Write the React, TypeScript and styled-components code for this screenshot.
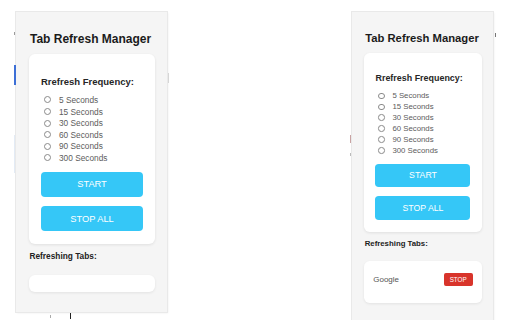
import React from "react";
import styled, { createGlobalStyle } from "styled-components";

const Global = createGlobalStyle`
  html, body { margin: 0; padding: 0; background: #ffffff; }
  body {
    font-family: "Liberation Sans", Arial, sans-serif;
    width: 512px; height: 320px; overflow: hidden;
  }
`;

const Page = styled.div`
  position: relative;
  width: 512px;
  height: 320px;
  overflow: hidden;
  box-sizing: border-box;
  padding: 12px 0 0 16px;
  display: flex;
  align-items: flex-start;
  gap: 185px;
`;

type S = { $s: number };

const Panel = styled.div<S & { $w: number; $h: number; $pt: number }>`
  width: ${(p) => p.$w}px;
  height: ${(p) => p.$h}px;
  flex: none;
  box-sizing: border-box;
  background: #f5f5f5;
  box-shadow: 0 0 0 1px #e9e9e9, 1px 1px 2px rgba(0, 0, 0, 0.08);
  padding: ${(p) => p.$pt}px ${(p) => 12 * p.$s}px 0 ${(p) => 13 * p.$s}px;
  display: flex;
  flex-direction: column;
`;

const Title = styled.h1<S>`
  margin: 0 0 ${(p) => 8 * p.$s}px ${(p) => 1 * p.$s}px;
  font-size: ${(p) => 12 * p.$s}px;
  line-height: ${(p) => 14 * p.$s}px;
  font-weight: bold;
  color: #1b1b1b;
`;

const Card = styled.div<S>`
  background: #ffffff;
  border-radius: ${(p) => 6 * p.$s}px;
  box-shadow: 0 1px 3px rgba(0, 0, 0, 0.09);
  padding: ${(p) => 21.5 * p.$s}px ${(p) => 12 * p.$s}px ${(p) => 13 * p.$s}px;
  display: flex;
  flex-direction: column;
`;

const Label = styled.div<S>`
  font-size: ${(p) => 9.5 * p.$s}px;
  line-height: ${(p) => 11 * p.$s}px;
  font-weight: bold;
  color: #262626;
  margin-bottom: ${(p) => 7.7 * p.$s}px;
`;

const OptionList = styled.div<S>`
  display: flex;
  flex-direction: column;
  margin-bottom: ${(p) => 8.2 * p.$s}px;
`;

const Option = styled.label<S>`
  display: flex;
  align-items: center;
  height: ${(p) => 11.6 * p.$s}px;
  font-size: ${(p) => 8.3 * p.$s}px;
  color: #5c5c5c;
  padding-left: ${(p) => 3 * p.$s}px;
`;

const Radio = styled.input<S>`
  appearance: none;
  margin: 0 ${(p) => 8 * p.$s}px 0 0;
  width: ${(p) => 7 * p.$s}px;
  height: ${(p) => 7 * p.$s}px;
  border: 1px solid #8a8a8a;
  border-radius: 50%;
  box-sizing: border-box;
  background: #fff;
`;

const Button = styled.button<S>`
  height: ${(p) => 25 * p.$s}px;
  border: none;
  border-radius: ${(p) => 4 * p.$s}px;
  background: #35c7f7;
  color: #ffffff;
  font-family: inherit;
  font-size: ${(p) => 9.3 * p.$s}px;
  padding: 0;
  & + & {
    margin-top: ${(p) => 10 * p.$s}px;
  }
`;

const Section = styled.div<S>`
  margin: ${(p) => 7 * p.$s}px 0 ${(p) => 14 * p.$s}px ${(p) => 0.5 * p.$s}px;
  font-size: ${(p) => 8.3 * p.$s}px;
  line-height: ${(p) => 10 * p.$s}px;
  font-weight: bold;
  color: #222;
`;

const TabsCard = styled.div<S>`
  background: #ffffff;
  border-radius: ${(p) => 6 * p.$s}px;
  box-shadow: 0 1px 3px rgba(0, 0, 0, 0.08);
  padding: ${(p) => 8.5 * p.$s}px ${(p) => 9.6 * p.$s}px;
  min-height: 0;
`;

const TabRow = styled.div<S>`
  display: flex;
  align-items: center;
  justify-content: space-between;
  padding: ${(p) => 4 * p.$s}px 0 ${(p) => 10 * p.$s}px;
`;

const TabName = styled.span<S>`
  font-size: ${(p) => 8.5 * p.$s}px;
  color: #555;
`;

const StopBtn = styled.button<S>`
  width: ${(p) => 31 * p.$s}px;
  height: ${(p) => 13.8 * p.$s}px;
  border: none;
  border-radius: ${(p) => 2 * p.$s}px;
  background: #d8342b;
  color: #fff;
  font-family: inherit;
  font-size: ${(p) => 6.7 * p.$s}px;
  padding: 0;
`;

const Mark = styled.div<{ $x: number; $y: number; $w: number; $h: number; $c: string }>`
  position: absolute;
  left: ${(p) => p.$x}px;
  top: ${(p) => p.$y}px;
  width: ${(p) => p.$w}px;
  height: ${(p) => p.$h}px;
  background: ${(p) => p.$c};
`;

const options = ["5 Seconds", "15 Seconds", "30 Seconds", "60 Seconds", "90 Seconds", "300 Seconds"];

function Popup({ s, w, h, pt, tabs, name }: { s: number; w: number; h: number; pt: number; tabs: string[]; name: string }) {
  return (
    <Panel $s={s} $w={w} $h={h} $pt={pt}>
      <Title $s={s}>Tab Refresh Manager</Title>
      <Card $s={s}>
        <Label $s={s}>Rrefresh Frequency:</Label>
        <OptionList $s={s}>
          {options.map((o) => (
            <Option $s={s} key={o}>
              <Radio $s={s} type="radio" name={name} />
              {o}
            </Option>
          ))}
        </OptionList>
        <Button $s={s}>START</Button>
        <Button $s={s}>STOP ALL</Button>
      </Card>
      <Section $s={s}>Refreshing Tabs:</Section>
      <TabsCard $s={s}>
        {tabs.map((t) => (
          <TabRow $s={s} key={t}>
            <TabName $s={s}>{t}</TabName>
            <StopBtn $s={s}>STOP</StopBtn>
          </TabRow>
        ))}
      </TabsCard>
    </Panel>
  );
}

export default function App() {
  return (
    <>
      <Global />
      <Page>
        <Mark $x={14} $y={65} $w={2} $h={20} $c="#3d6fd6" />
        <Mark $x={14} $y={135} $w={1} $h={38} $c="#e3ebf5" />
        <Mark $x={14} $y={32} $w={1} $h={3} $c="#9a9a9a" />
        <Mark $x={168} $y={73} $w={1} $h={10} $c="#d6d6d6" />
        <Mark $x={70} $y={313} $w={1} $h={6} $c="#222" />
        <Mark $x={50} $y={315} $w={1} $h={3} $c="#aaa" />
        <Mark $x={350} $y={135} $w={1} $h={8} $c="#c9a3a3" />
        <Mark $x={350} $y={153} $w={1} $h={3} $c="#bbb" />
        <Mark $x={495} $y={33} $w={1} $h={4} $c="#777" />
        <Popup s={1} w={151} h={300} pt={20} tabs={[]} name="a" />
        <Popup s={0.94} w={141} h={312} pt={20} tabs={["Google"]} name="b" />
      </Page>
    </>
  );
}
